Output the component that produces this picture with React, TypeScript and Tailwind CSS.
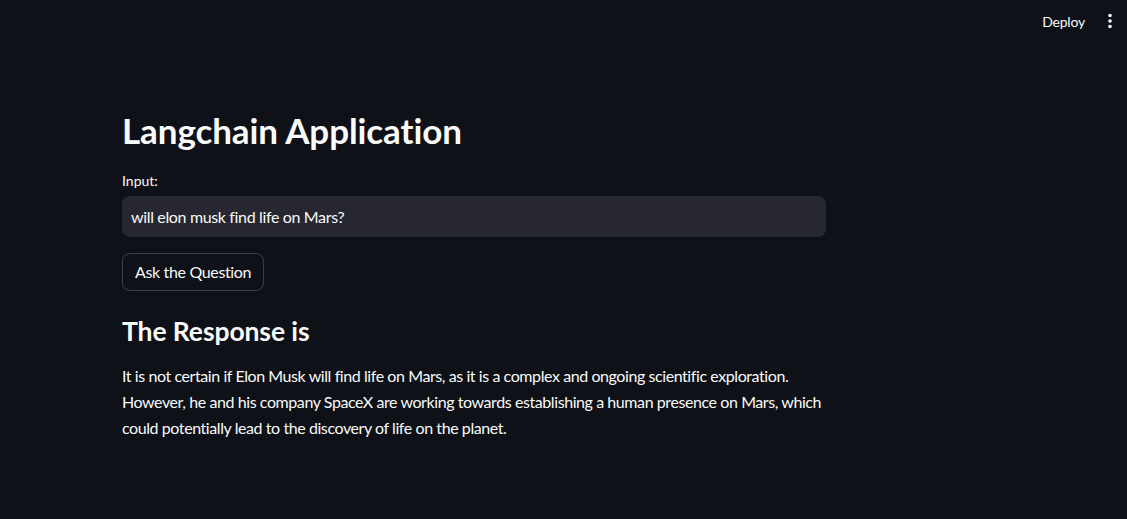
export default function App() {
  return (
    <div className="min-h-screen w-full bg-[#0e1117] text-[#fafafa]" style={{ fontFamily: 'Lato, "Noto Sans", sans-serif' }}>
      <header className="h-[42px] flex items-center justify-end pr-[12px]">
        <span className="text-[14px] mr-[22px] tracking-[-0.2px]">Deploy</span>
        <svg width="6" height="16" viewBox="0 0 6 16" className="mr-[2px]">
          <circle cx="3" cy="2.5" r="1.8" fill="#fafafa" />
          <circle cx="3" cy="8" r="1.8" fill="#fafafa" />
          <circle cx="3" cy="13.5" r="1.8" fill="#fafafa" />
        </svg>
      </header>
      <main className="pl-[122px] w-[826px] flex flex-col">
        <h1 className="mt-[66px] text-[35px] font-bold leading-[44px] tracking-[-0.1px]">Langchain Application</h1>
        <label className="mt-[19px] text-[14px] leading-[20px]">Input:</label>
        <div className="mt-[5px] h-[41px] rounded-[8px] bg-[#262730] flex items-center pl-[9px] text-[16px] tracking-[-0.35px]">
          will elon musk find life on Mars?
        </div>
        <div className="mt-[16px]">
          <button className="h-[38px] px-[12px] rounded-[8px] border border-[rgba(250,250,250,0.2)] text-[16px] tracking-[-0.35px]">Ask the Question</button>
        </div>
        <h3 className="mt-[20px] text-[26.5px] font-bold leading-[40px] tracking-[-0.1px]">The Response is</h3>
        <p className="mt-[12px] text-[16px] leading-[26px] tracking-[-0.42px] whitespace-nowrap">
          It is not certain if Elon Musk will find life on Mars, as it is a complex and ongoing scientific exploration.
          <br />
          However, he and his company SpaceX are working towards establishing a human presence on Mars, which
          <br />
          could potentially lead to the discovery of life on the planet.
        </p>
      </main>
    </div>
  );
}
